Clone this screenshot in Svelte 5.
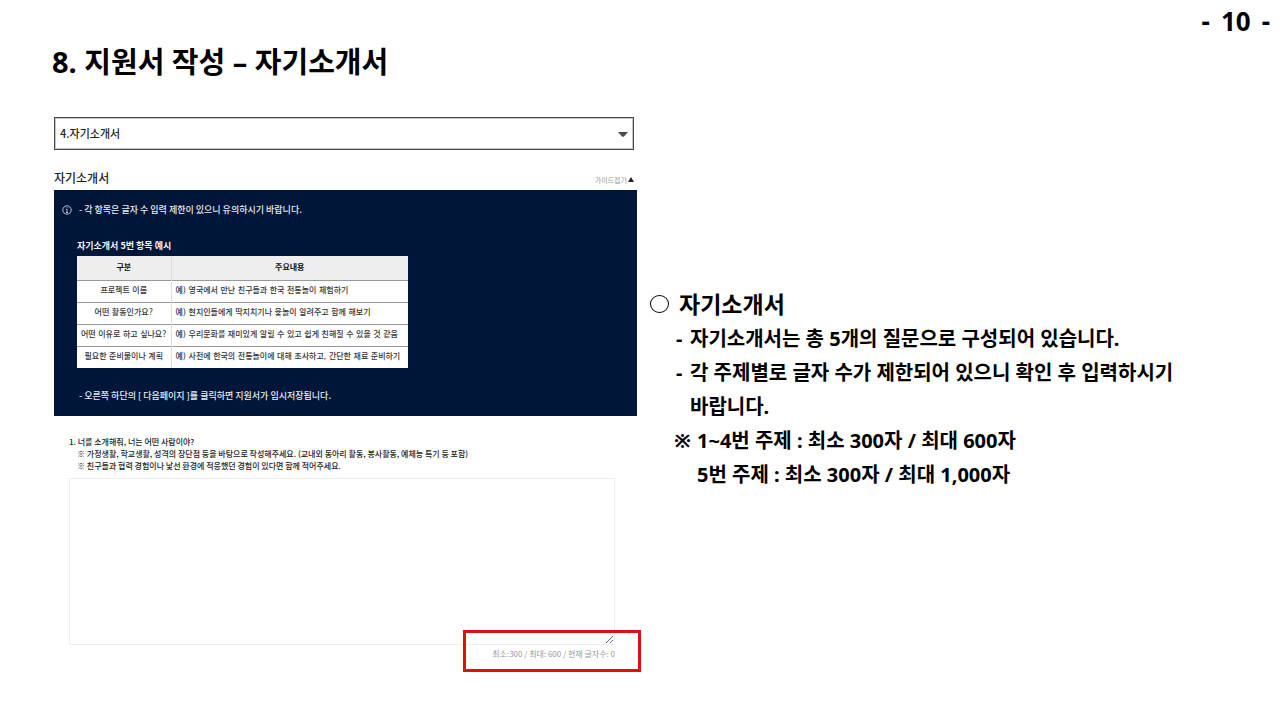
<script>
  const examples = [
    ['프로젝트 이름', '예) 영국에서 만난 친구들과 한국 전통놀이 체험하기'],
    ['어떤 활동인가요?', '예) 현지인들에게 딱지치기나 윷놀이 알려주고 함께 해보기'],
    ['어떤 이유로 하고 싶나요?', '예) 우리문화를 재미있게 알릴 수 있고 쉽게 친해질 수 있을 것 같음'],
    ['필요한 준비물이나 계획', '예) 사전에 한국의 전통놀이에 대해 조사하고, 간단한 재료 준비하기']
  ];
  let answer = $state('');
  let open = $state(true);
</script>

<div class="page">
  <header>
    <p class="number"><span>-</span> <span>10</span> <span>-</span></p>
    <h1>8. 지원서 작성 – 자기소개서</h1>
  </header>

  <main>
    <section class="form">
      <div class="picker">
        <select aria-label="작성 단계">
          <option>4.자기소개서</option>
        </select>
        <svg viewBox="0 0 10 5" aria-hidden="true"><path d="M0 0h10L6 4.4Q5 5.2 4 4.4Z" /></svg>
      </div>

      <div class="bar">
        <h2>자기소개서</h2>
        <button type="button" onclick={() => (open = !open)}>
          가이드접기<svg viewBox="0 0 6 5" aria-hidden="true"><path d="M3 0l3 5H0z" /></svg>
        </button>
      </div>

      {#if open}
        <div class="guide">
          <p class="note">
            <svg viewBox="0 0 10 10" aria-hidden="true">
              <circle cx="5" cy="5" r="4.2" />
              <path d="M5 2.2v1.1M5 4.2v3.4M4.2 4.4H5M4 7.5h2" />
            </svg>
            - 각 항목은 글자 수 입력 제한이 있으니 유의하시기 바랍니다.
          </p>
          <table>
            <caption>자기소개서 5번 항목 예시</caption>
            <thead>
              <tr><th scope="col">구분</th><th scope="col">주요내용</th></tr>
            </thead>
            <tbody>
              {#each examples as [kind, text]}
                <tr><td>{kind}</td><td>{text}</td></tr>
              {/each}
            </tbody>
          </table>
          <p class="save">- 오른쪽 하단의 [ 다음페이지 ]를 클릭하면 지원서가 임시저장됩니다.</p>
        </div>
      {/if}

      <div class="question">
        <label for="answer">
          1. 너를 소개해줘, 너는 어떤 사람이야?
          <span>※ 가정생활, 학교생활, 성격의 장단점 등을 바탕으로 작성해주세요. (교내외 동아리 활동, 봉사활동, 예체능 특기 등 포함)</span>
          <span>※ 친구들과 협력 경험이나 낯선 환경에 적응했던 경험이 있다면 함께 적어주세요.</span>
        </label>
        <textarea id="answer" bind:value={answer}></textarea>
        <p class="count">최소:300 / 최대: 600 / 현재 글자수: {answer.length}</p>
        <div class="mark"></div>
      </div>
    </section>

    <section class="notes">
      <h2><i></i>자기소개서</h2>
      <ul>
        <li><span>-</span>자기소개서는 총 5개의 질문으로 구성되어 있습니다.</li>
        <li><span>-</span>각 주제별로 글자 수가 제한되어 있으니 확인 후 입력하시기 바랍니다.</li>
      </ul>
      <p class="limits"><span>※</span>1~4번 주제 : 최소 300자 / 최대 600자<br />5번 주제 : 최소 300자 / 최대 1,000자</p>
    </section>
  </main>
</div>

<style>
  :global(body) {
    margin: 0;
    background: #fff;
  }
  .page {
    color: #000;
    font-family: 'Noto Sans', 'Noto Sans CJK KR', sans-serif;
  }
  .page * {
    box-sizing: border-box;
  }
  h1, h2, p, ul {
    margin: 0;
    padding: 0;
  }
  header {
    font-weight: 700;
  }
  .number {
    display: flex;
    justify-content: flex-end;
    gap: 11px;
    padding: 5px 10px 0 0;
    font-size: 26px;
    line-height: 32px;
  }
  h1 {
    padding: 5px 0 0 52px;
    font-size: 29px;
    line-height: 40px;
  }
  main {
    display: grid;
    grid-template-columns: minmax(0, 583fr) minmax(0, 630fr);
    column-gap: 13px;
    padding: 35px 0 48px 54px;
  }
  .form {
    font-family: 'Noto Sans CJK KR', sans-serif;
  }
  .picker {
    position: relative;
    margin-right: 3px;
  }
  select {
    display: block;
    width: 100%;
    height: 33px;
    padding: 0 24px 1px 5px;
    border: 1px solid #4a4648;
    outline: 1px solid #c8c6c7;
    outline-offset: -2px;
    border-radius: 0;
    background: #fff;
    color: #222;
    font: 500 11px 'Noto Sans CJK KR', sans-serif;
    appearance: none;
  }
  .picker svg {
    position: absolute;
    top: 15px;
    right: 6px;
    width: 10px;
    height: 5px;
    fill: #4c494a;
    pointer-events: none;
  }
  .bar {
    display: flex;
    justify-content: space-between;
    align-items: center;
    height: 40px;
    padding: 16px 3px 0 0;
  }
  .bar h2 {
    color: #222;
    font-size: 12px;
    font-weight: 500;
    line-height: 20px;
  }
  .bar button {
    display: flex;
    align-items: center;
    gap: 1px;
    padding: 3px 0 0;
    border: 0;
    background: none;
    color: #999;
    font: 7px/12px 'Noto Sans CJK KR', sans-serif;
  }
  .bar svg {
    width: 6px;
    height: 5px;
    fill: #222;
  }
  .guide {
    padding: 12px 8px 12px 23px;
    background: #001639;
    color: #e8edf5;
    font-size: 9px;
    font-weight: 500;
    line-height: 16px;
  }
  .note {
    display: flex;
    align-items: center;
    gap: 7px;
    margin-left: -15px;
  }
  .note svg {
    width: 10px;
    height: 10px;
    fill: none;
    stroke: #e8edf5;
    stroke-width: 0.8;
  }
  table {
    width: 331px;
    max-width: 100%;
    margin-top: 20px;
    border-collapse: collapse;
    background: #fff;
    color: #333;
    font-family: 'DejaVu Sans', 'Noto Sans CJK KR', sans-serif;
    font-size: 8px;
    line-height: 12px;
  }
  caption {
    padding-bottom: 2px;
    color: #f2f5fa;
    font-family: 'Noto Sans CJK KR', sans-serif;
    font-size: 9px;
    font-weight: 700;
    line-height: 16px;
    text-align: left;
  }
  th, td {
    height: 22px;
    padding: 0;
    border-top: 1px solid #999;
    text-align: center;
    white-space: nowrap;
  }
  th {
    height: 24px;
    border-top: 0;
    background: #eee;
    color: #111;
  }
  td:last-child {
    padding-left: 4px;
    text-align: left;
  }
  th:first-child, td:first-child {
    width: 94px;
    border-right: 1px solid #ddd;
  }
  .save {
    padding: 20px 0 0 2px;
  }
  .question {
    position: relative;
    padding: 20px 22px 9px 15px;
  }
  label {
    display: block;
    color: #222;
    font-size: 8px;
    font-weight: 500;
    line-height: 12px;
  }
  label span {
    display: block;
    padding-left: 8px;
  }
  textarea {
    display: block;
    width: 100%;
    height: 167px;
    margin-top: 6px;
    padding: 8px;
    border: 1px solid #eee;
    outline: 0;
    background: #fff;
    font: 10px 'Noto Sans CJK KR', sans-serif;
    resize: vertical;
  }
  .count {
    color: #999;
    font-size: 8px;
    line-height: 18px;
    text-align: right;
  }
  .mark {
    position: absolute;
    right: -4px;
    bottom: 0;
    width: 178px;
    height: 42px;
    border: 3px solid #e01010;
    pointer-events: none;
  }
  .notes {
    align-self: center;
    padding: 0 60px 12px 0;
    font-size: 20px;
    font-weight: 700;
    line-height: 34px;
  }
  .notes h2 {
    display: flex;
    align-items: center;
    gap: 10px;
    font-size: 23px;
    line-height: 36px;
  }
  .notes i {
    width: 19px;
    height: 18px;
    border: 1px solid #000;
    border-radius: 50%;
  }
  ul {
    list-style: none;
  }
  li, .limits {
    padding-left: 40px;
    word-break: keep-all;
  }
  .limits {
    padding-left: 47px;
  }
  li span, .limits span {
    display: inline-block;
    width: 14px;
    margin-left: -14px;
  }
  .limits span {
    width: 23px;
    margin-left: -23px;
  }
  @media (max-width: 900px) {
    main {
      grid-template-columns: minmax(0, 1fr);
      padding-right: 20px;
      row-gap: 24px;
    }
  }
</style>
